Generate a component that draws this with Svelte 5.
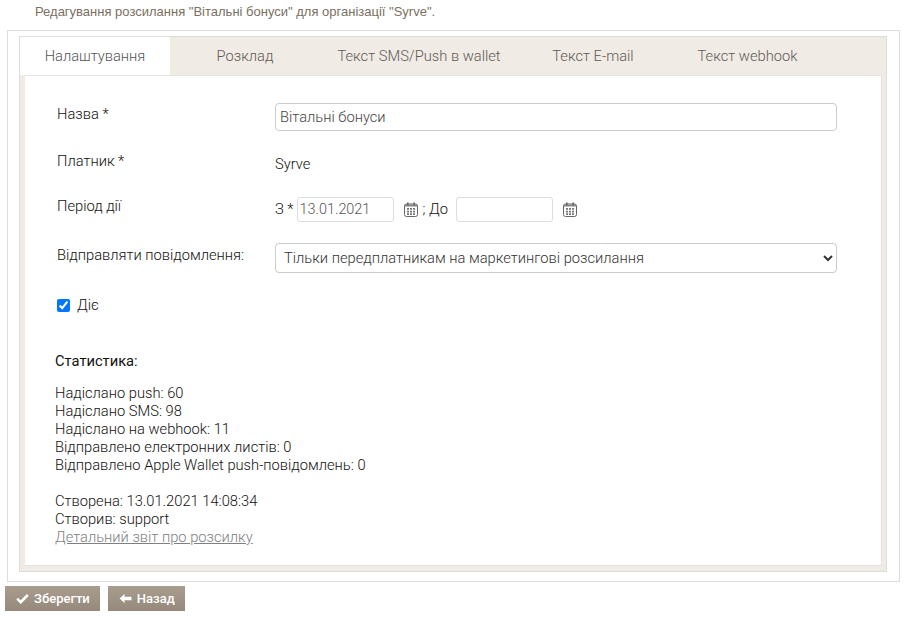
<script>
  const tabs = ["Налаштування", "Розклад", "Текст SMS/Push в wallet", "Текст E-mail", "Текст webhook"];
  const stats = [
    "Надіслано push: 60",
    "Надіслано SMS: 98",
    "Надіслано на webhook: 11",
    "Відправлено електронних листів: 0",
    "Відправлено Apple Wallet push-повідомлень: 0"
  ];
</script>

{#snippet calendar()}
  <svg class="cal" viewBox="0 0 14 15" width="14" height="15" aria-hidden="true">
    <rect x="0.5" y="2" width="13" height="12.5" rx="2" fill="#fff" stroke="#666" />
    <rect x="1" y="2.5" width="12" height="2" fill="#888" />
    <rect x="3" y="0.5" width="1.6" height="3" fill="#666" />
    <rect x="9.4" y="0.5" width="1.6" height="3" fill="#666" />
    <path d="M3 6h2v1.7H3zM6 6h2v1.7H6zM9 6h2v1.7H9zM3 8.7h2v1.7H3zM6 8.7h2v1.7H6zM9 8.7h2v1.7H9zM3 11.2h2v1.7H3zM6 11.2h2v1.7H6zM9 11.2h2v1.7H9z" fill="#777" />
  </svg>
{/snippet}

<div class="page">
  <p class="title">Редагування розсилання "Вітальні бонуси" для організації "Syrve".</p>

  <div class="panel">
    <div class="tabs">
      <ul class="tabbar">
        {#each tabs as tab, i}
          <li class="tab" class:active={i === 0}>{tab}</li>
        {/each}
      </ul>

      <div class="content">
        <div class="row r-name">
          <span class="label">Назва *</span>
          <input class="control" type="text" value="Вітальні бонуси" />
        </div>

        <div class="row r-payer">
          <span class="label">Платник *</span>
          <span class="value">Syrve</span>
        </div>

        <div class="row r-period">
          <span class="label">Період дії</span>
          <div class="dates">
            <span class="from">З *</span>
            <input class="date" type="text" value="13.01.2021" />
            {@render calendar()}
            <span class="to">; До</span>
            <input class="date" type="text" />
            {@render calendar()}
          </div>
        </div>

        <div class="row r-send">
          <span class="label">Відправляти повідомлення:</span>
          <select class="control select">
            <option>Тільки передплатникам на маркетингові розсилання</option>
          </select>
        </div>

        <label class="active-check">
          <input type="checkbox" checked />
          <span>Діє</span>
        </label>

        <div class="stats">
          <h4>Статистика:</h4>
          {#each stats as line}
            <div>{line}</div>
          {/each}
          <div class="created">Створена: 13.01.2021 14:08:34</div>
          <div>Створив: support</div>
          <a href="#report">Детальний звіт про розсилку</a>
        </div>
      </div>
    </div>
  </div>

  <div class="buttons">
    <button type="button">
      <svg viewBox="0 0 14 12" width="13" height="11" aria-hidden="true">
        <path d="M1.2 6.2 5 10 12.8 2.2" fill="none" stroke="#fff" stroke-width="2.8" />
      </svg>
      Зберегти
    </button>
    <button type="button">
      <svg viewBox="0 0 14 12" width="13" height="11" aria-hidden="true">
        <path d="M0.5 6 6 1v3h7.5v4H6v3z" fill="#fff" />
      </svg>
      Назад
    </button>
  </div>
</div>

<style>
  :global(body) {
    margin: 0;
    background: #fff;
    font-family: Roboto, "Liberation Sans", sans-serif;
    font-size: 14.7px;
    font-weight: 300;
    color: #111;
  }

  .page {
    width: 907px;
    height: 617px;
    overflow: hidden;
  }

  .title {
    margin: 0;
    padding: 4px 0 0 35px;
    height: 30px;
    box-sizing: border-box;
    font-family: "Liberation Sans", Arial, sans-serif;
    font-size: 13px;
    font-weight: 400;
    line-height: 16px;
    color: #7b6f62;
  }

  .panel {
    box-sizing: border-box;
    margin-left: 7px;
    width: 893px;
    height: 552px;
    padding: 5px 12px 9px 11px;
    border: 1px solid #ddd;
    background: #fff;
  }

  .tabs {
    box-sizing: border-box;
    height: 536px;
    border: 1px solid #ddd;
    background: #f0ebe5;
    padding: 0 4px 5px 5px;
    display: flex;
    flex-direction: column;
  }

  .tabbar {
    list-style: none;
    display: flex;
    margin: 0 0 0 -5px;
    padding: 0;
    height: 38px;
    flex: none;
  }

  .tab {
    box-sizing: border-box;
    height: 38px;
    line-height: 38px;
    width: 150px;
    text-align: center;
    color: #5f5a55;
    white-space: nowrap;
  }

  .tab.active {
    background: #fff;
    color: #555;
  }

  .tab:nth-child(3) { width: 198px; }
  .tab:nth-child(5) { width: 159px; }

  .content {
    flex: 1;
    background: #fff;
    border: 1px solid #e3e3e3;
    border-left: 0;
    padding: 0 0 0 32px;
    box-sizing: border-box;
  }

  .row {
    display: flex;
    align-items: flex-start;
  }

  .label {
    width: 218px;
    flex: none;
    line-height: 20px;
  }

  .control {
    box-sizing: border-box;
    width: 562px;
    height: 28px;
    padding: 0 4px;
    border: 1px solid #ccc;
    border-radius: 4px;
    background: #fff;
    font-family: inherit;
    font-size: 14.7px;
    font-weight: 300;
    color: #444;
    outline: none;
  }

  .select {
    height: 30px;
    color: #333;
  }

  .r-name { padding-top: 27px; }
  .r-name .label { margin-top: 1px; }
  .r-payer { padding-top: 20px; }
  .r-payer .value { padding-top: 3px; line-height: 20px; }
  .r-period { padding-top: 22px; }
  .r-send { padding-top: 22px; }
  .r-send .label { margin-top: 2px; }

  .dates {
    display: flex;
    align-items: center;
    height: 24px;
    margin-top: 1px;
  }

  .from { margin-right: 3px; }

  .date {
    box-sizing: border-box;
    width: 97px;
    height: 25px;
    padding: 0 2px;
    border: 1px solid #ddd;
    border-radius: 3px;
    font-family: inherit;
    font-size: 14.4px;
    font-weight: 300;
    color: #555;
    outline: none;
  }

  .cal { margin-left: 10px; flex: none; }
  .to { margin: 0 8px 0 5px; }

  .active-check {
    display: flex;
    align-items: center;
    margin-top: 22px;
    height: 20px;
  }

  .active-check input {
    width: 13px;
    height: 13px;
    margin: 0 7px 0 0;
    accent-color: #0075ff;
  }

  .stats {
    margin: 36px 0 0 -2px;
    line-height: 18px;
  }

  .stats h4 {
    margin: 0 0 13px;
    font-size: 14.7px;
    font-weight: 400;
    line-height: 20px;
    color: #111;
  }

  .created { margin-top: 18px; }

  .stats a { color: #808080; }

  .buttons {
    display: flex;
    gap: 8px;
    margin: 4px 0 0 5px;
  }

  button {
    display: flex;
    align-items: center;
    gap: 5px;
    height: 25px;
    padding: 0 10px 0 11px;
    border: 0;
    background: linear-gradient(#a89d8e, #94897a);
    color: #fff;
    font-family: inherit;
    font-size: 13px;
    font-weight: 500;
  }
</style>
